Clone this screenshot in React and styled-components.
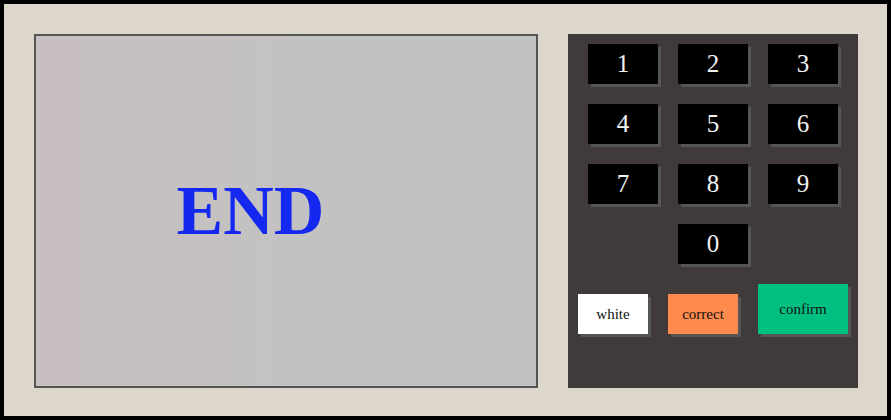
import React from "react";
import styled, { createGlobalStyle } from "styled-components";

const Global = createGlobalStyle`
  html, body {
    margin: 0;
    padding: 0;
  }
  body {
    font-family: "Liberation Serif", "Times New Roman", serif;
  }
`;

const Frame = styled.div`
  box-sizing: border-box;
  width: 891px;
  height: 420px;
  border: 4px solid #000;
  background: #ddd6cb;
  padding: 30px 29px 28px 30px;
  display: flex;
  gap: 30px;
`;

const Screen = styled.div`
  box-sizing: border-box;
  width: 504px;
  height: 354px;
  border: 2px solid #555;
  background: linear-gradient(to right, #c8bfc0, #c2c2c2 60%);
  display: flex;
  align-items: center;
  justify-content: center;
  padding-right: 71px;
`;

const Message = styled.h1`
  margin: 0;
  font-size: 70px;
  font-weight: 700;
  color: #1428f0;
  line-height: 1;
`;

const Pad = styled.div`
  width: 290px;
  height: 354px;
  background: #403a3a;
  padding-top: 10px;
  box-sizing: border-box;
`;

const KeyGrid = styled.div`
  display: grid;
  grid-template-columns: repeat(3, 70px);
  grid-auto-rows: 40px;
  gap: 20px;
  margin: 0 20px;
`;

const Key = styled.button`
  border: none;
  padding: 0;
  margin: 0;
  width: 70px;
  height: 40px;
  background: #000;
  color: #f2f2f2;
  font-family: inherit;
  font-size: 25px;
  box-shadow: 3px 3px 0 #555;
  grid-column: ${(p) => p.$col || "auto"};
  cursor: pointer;
`;

const Actions = styled.div`
  display: flex;
  align-items: flex-end;
  gap: 20px;
  padding-left: 10px;
  margin-top: 20px;
`;

const Action = styled.button`
  border: none;
  padding: 0;
  margin: 0;
  width: ${(p) => (p.$big ? "90px" : "70px")};
  height: ${(p) => (p.$big ? "50px" : "40px")};
  background: ${(p) => p.$bg};
  color: #111;
  font-family: inherit;
  font-size: 15px;
  box-shadow: 3px 3px 0 #555;
  cursor: pointer;
`;

export default function App() {
  const digits = ["1", "2", "3", "4", "5", "6", "7", "8", "9"];
  return (
    <>
      <Global />
      <Frame>
        <Screen>
          <Message>END</Message>
        </Screen>
        <Pad>
          <KeyGrid>
            {digits.map((d) => (
              <Key key={d}>{d}</Key>
            ))}
            <Key $col="2">0</Key>
          </KeyGrid>
          <Actions>
            <Action $bg="#fff">white</Action>
            <Action $bg="#ff8a4e">correct</Action>
            <Action $bg="#00c081" $big>
              confirm
            </Action>
          </Actions>
        </Pad>
      </Frame>
    </>
  );
}
